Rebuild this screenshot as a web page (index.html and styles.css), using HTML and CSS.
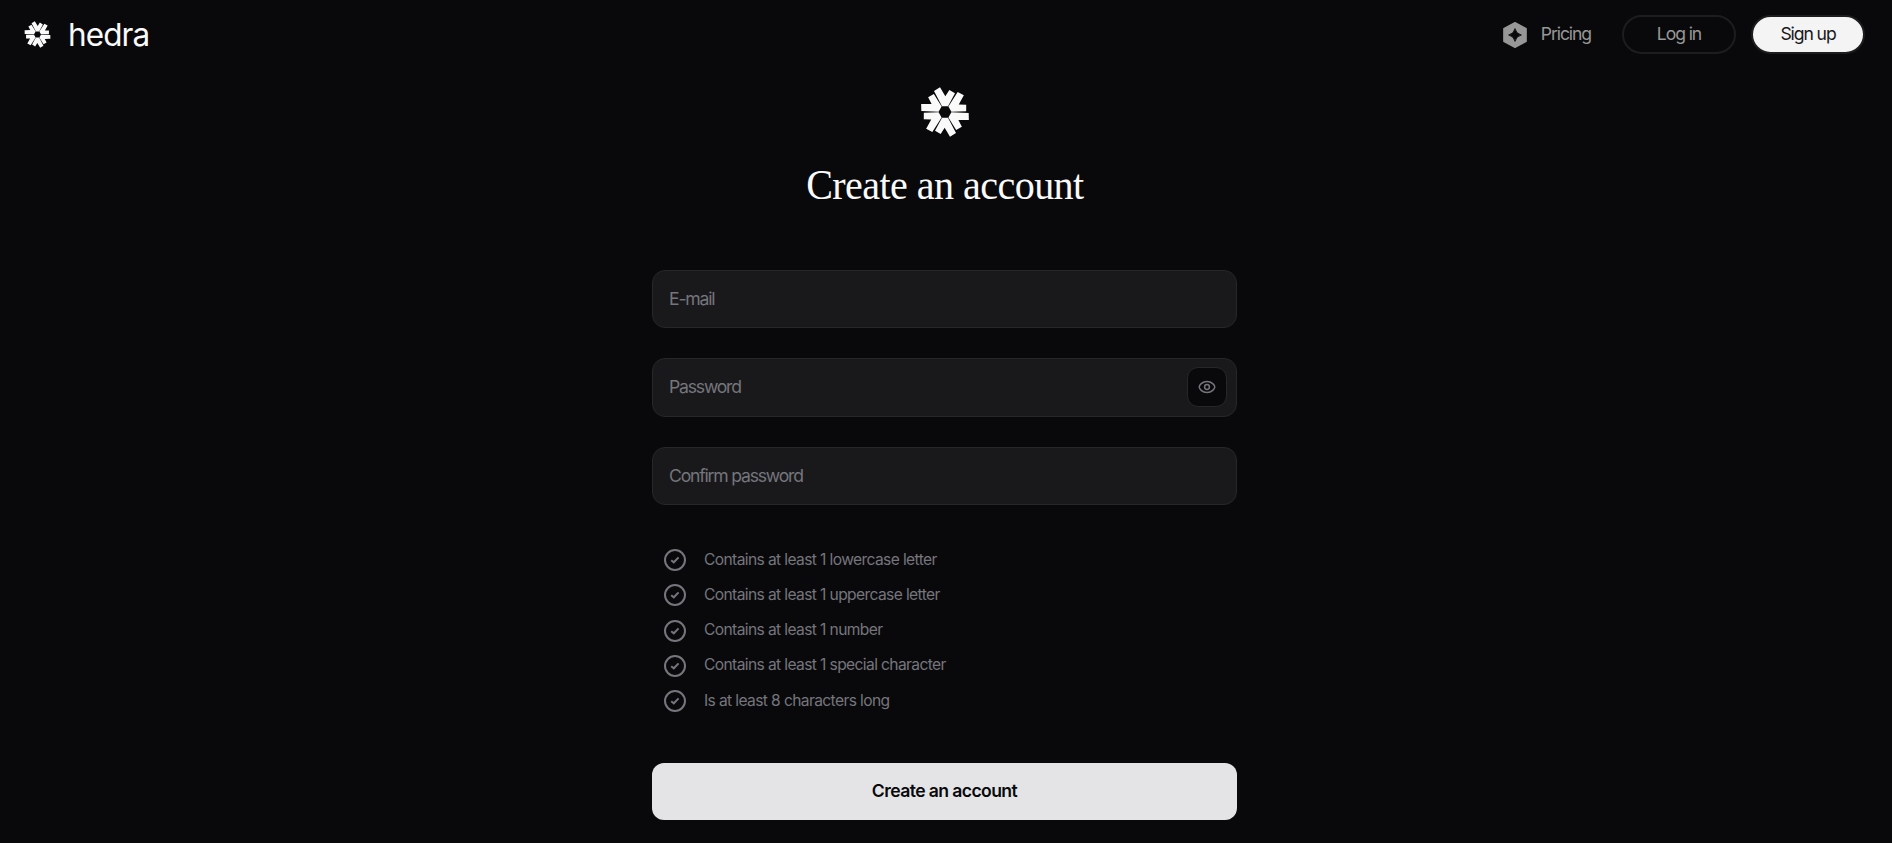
FILE: index.html
```
<!DOCTYPE html>
<html lang="en">
<head>
    <meta charset="UTF-8">
    <meta name="viewport" content="width=device-width, initial-scale=1.0">
    <title>Create an account - Hedra</title>
    <link rel="stylesheet" href="styles.css">
</head>
<body>
    <!-- Shared icons -->
    <svg class="icon-defs" width="0" height="0" aria-hidden="true">
        <symbol id="logo-mark" viewBox="-75 -75 150 150">
            <g id="petals" fill="currentColor">
                <path id="petal" d="M-9 -17 L-33 -63 L-15 -74 L1 -47 L13 -66 L30 -56 L9 -17 Z"/>
                <use href="#petal" transform="rotate(60)"/>
                <use href="#petal" transform="rotate(120)"/>
                <use href="#petal" transform="rotate(180)"/>
                <use href="#petal" transform="rotate(240)"/>
                <use href="#petal" transform="rotate(300)"/>
            </g>
        </symbol>
        <symbol id="check" viewBox="0 0 22 22">
            <circle cx="11" cy="11" r="10" fill="none" stroke="currentColor" stroke-width="2"/>
            <path d="M7.2 11.2 L9.8 13.3 L14.6 8.4" fill="none" stroke="currentColor" stroke-width="2"/>
        </symbol>
    </svg>

    <header class="navbar">
        <a href="#" class="brand">
            <svg class="brand-mark"><use href="#logo-mark"/></svg>
            <span class="brand-name">hedra</span>
        </a>
        <nav class="nav-links">
            <a href="#" class="pricing">
                <svg class="pricing-icon" viewBox="0 0 24 26">
                    <path d="M12 0.6 L23.2 6.6 V19.4 L12 25.4 L0.8 19.4 V6.6 Z" fill="#979797" stroke="#979797" stroke-width="1.2" stroke-linejoin="round"/>
                    <path d="M12 6.6 Q13.2 11.8 18.4 13 Q13.2 14.2 12 19.4 Q10.8 14.2 5.6 13 Q10.8 11.8 12 6.6 Z" fill="#09090b" stroke="#09090b" stroke-width="0.8"/>
                </svg>
                <span>Pricing</span>
            </a>
            <a href="#" class="nav-btn login">Log in</a>
            <a href="#" class="nav-btn signup">Sign up</a>
        </nav>
    </header>

    <main class="signup-container">
        <svg class="main-logo"><use href="#logo-mark"/></svg>
        <h1>Create an account</h1>

        <form class="signup-form">
            <div class="input-group">
                <input type="email" placeholder="E-mail" aria-label="E-mail">
            </div>
            <div class="input-group password-group">
                <input type="password" placeholder="Password" aria-label="Password">
                <button type="button" class="toggle-password" aria-label="Show password">
                    <svg viewBox="0 0 18 14" fill="none" stroke="currentColor" stroke-width="1.5">
                        <path d="M1.2 7 C1.2 5.6 4 1.4 9 1.4 S16.8 5.6 16.8 7 S14 12.6 9 12.6 S1.2 8.4 1.2 7 Z"/>
                        <circle cx="9" cy="7" r="2.4"/>
                    </svg>
                </button>
            </div>
            <div class="input-group">
                <input type="password" placeholder="Confirm password" aria-label="Confirm password">
            </div>

            <ul class="password-rules">
                <li><svg><use href="#check"/></svg><span>Contains at least 1 lowercase letter</span></li>
                <li><svg><use href="#check"/></svg><span>Contains at least 1 uppercase letter</span></li>
                <li><svg><use href="#check"/></svg><span>Contains at least 1 number</span></li>
                <li><svg><use href="#check"/></svg><span>Contains at least 1 special character</span></li>
                <li><svg><use href="#check"/></svg><span>Is at least 8 characters long</span></li>
            </ul>

            <button type="submit" class="submit-btn">Create an account</button>
        </form>
    </main>
</body>
</html>
```

FILE: styles.css
```
:root {
    --bg: #09090b;
    --field: #19191b;
    --border: #27272a;
    --muted: #75757c;
    --nav-text: #979797;
}

* {
    box-sizing: border-box;
}

body {
    margin: 0;
    height: 100vh;
    overflow: hidden;
    background-color: var(--bg);
    color: #fafafa;
    font-family: Inter, sans-serif;
    font-size: 17.6px;
    letter-spacing: -1.1px;
}

a {
    color: inherit;
    text-decoration: none;
}

.icon-defs {
    display: none;
}

.navbar {
    height: 69px;
    padding: 0 27px 0 24px;
    display: flex;
    align-items: center;
    justify-content: space-between;
}

.brand {
    display: flex;
    align-items: center;
    gap: 17px;
}

.brand-mark {
    width: 27px;
    height: 27px;
}

.brand-name {
    font-size: 31.5px;
    font-weight: 400;
    line-height: 34px;
    letter-spacing: -0.9px;
}

.nav-links {
    display: flex;
    align-items: center;
    color: var(--nav-text);
}

.nav-links span,
.nav-btn {
    padding-bottom: 2px;
}

.pricing {
    display: flex;
    align-items: center;
    gap: 14px;
    margin-right: 31px;
}

.pricing-icon {
    width: 24px;
    height: 26px;
}

.nav-btn {
    height: 39px;
    border: 2px solid #1d1d20;
    border-radius: 20px;
    display: flex;
    align-items: center;
    justify-content: center;
}

.login {
    width: 114px;
    margin-right: 15px;
}

.signup {
    width: 114px;
    background-color: #f4f4f5;
    color: #18181b;
}

.signup-container {
    width: 585px;
    margin: 0 auto 0 652px;
    display: flex;
    flex-direction: column;
    align-items: center;
}

.main-logo {
    width: 50px;
    height: 50px;
    margin-top: 18px;
}

h1 {
    margin: 23px 0 0;
    font-family: "Liberation Serif", serif;
    font-size: 43px;
    font-weight: 400;
    line-height: 50px;
    letter-spacing: -0.6px;
    white-space: nowrap;
    transform: scaleX(0.932);
}

.signup-form {
    width: 100%;
    margin-top: 60px;
}

.input-group {
    height: 58px;
    margin-bottom: 30px;
    padding: 0 9px 0 16px;
    display: flex;
    align-items: center;
    background-color: var(--field);
    border: 1px solid var(--border);
    border-radius: 13px;
}

.password-group {
    height: 59px;
}

.input-group input {
    flex: 1;
    padding: 0 0 2px;
    border: none;
    outline: none;
    background: none;
    color: #fafafa;
    font: inherit;
    letter-spacing: -1.2px;
}

.input-group input::placeholder {
    color: var(--muted);
}

.toggle-password {
    width: 40px;
    height: 40px;
    margin-bottom: 1px;
    padding: 0;
    display: flex;
    align-items: center;
    justify-content: center;
    background-color: var(--bg);
    border: 1px solid var(--border);
    border-radius: 11px;
    color: var(--muted);
}

.toggle-password svg {
    width: 18px;
    height: 14px;
}

.password-rules {
    list-style: none;
    margin: 44px 0 51px;
    padding: 0 0 0 12px;
    display: flex;
    flex-direction: column;
    gap: 13.3px;
    color: var(--muted);
    font-size: 15.6px;
    letter-spacing: -0.62px;
}

.password-rules li {
    height: 22px;
    display: flex;
    align-items: center;
    gap: 18px;
}

.password-rules svg {
    width: 22px;
    height: 22px;
}

.password-rules span {
    line-height: 20px;
    padding-bottom: 1px;
}

.submit-btn {
    width: 100%;
    height: 57px;
    padding: 0 0 2px;
    border: none;
    border-radius: 12px;
    background-color: #e4e4e7;
    color: #09090b;
    font: inherit;
    font-weight: 600;
    letter-spacing: -0.6px;
}
```
